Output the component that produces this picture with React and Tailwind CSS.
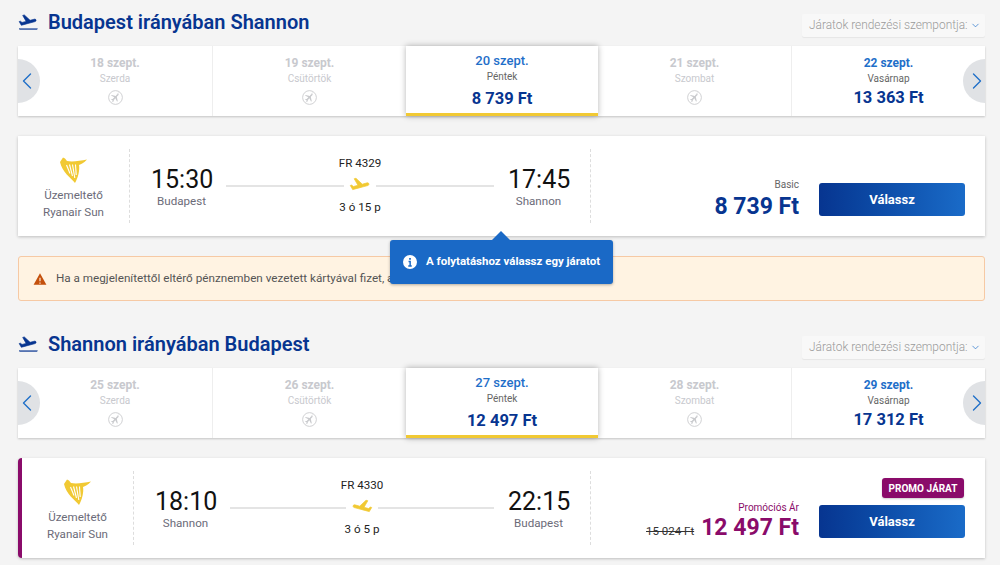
import React from 'react';
import { ChevronLeft, ChevronRight, ChevronDown } from 'lucide-react';

const TAKEOFF =
  'M21.64 9.64c-.21-.8-1.04-1.28-1.84-1.06L14.49 10 7.59 3.57l-1.93.51 4.14 7.17-4.97 1.33-1.97-1.54-1.45.39 1.82 3.16.77 1.33 1.6-.43 5.31-1.42 4.35-1.16 5.32-1.42c.81-.23 1.28-1.05 1.07-1.85z';

const PlaneHeading = () => (
  <svg viewBox="0 0 24 24" className="w-5 h-5 mr-[10px] mt-1 fill-[#073590] stroke-[#073590]">
    <path d={TAKEOFF} strokeWidth="0.8" />
    <rect x="2" y="20" width="21" height="1" strokeWidth="0.4" />
  </svg>
);

const NoFlight = () => (
  <svg viewBox="0 0 24 24" className="w-[15px] h-[15px] mx-auto">
    <circle cx="12" cy="12" r="11" fill="none" stroke="#c9cacd" strokeWidth="1.4" />
    <path
      transform="translate(12 12) rotate(45) scale(.72) translate(-12 -12)"
      fill="#c9cacd"
      d="M21 16v-2l-8-5V3.5c0-.83-.67-1.5-1.5-1.5S10 2.67 10 3.5V9l-8 5v2l8-2.5V19l-2 1.5V22l3.5-1 3.5 1v-1.5L13 19v-5.500l8 2.500z"
    />
    <path d="M6 20 17 4" stroke="#c9cacd" strokeWidth="1" />
  </svg>
);

const Harp = () => (
  <svg viewBox="0 0 27 27" className="w-[27px] h-[27px]">
    <path
      fill="#f1c933"
      d="M0 6 3 1.5 5 2.5 7 5C12 6 20 5 27 3.5 24 7 21 8 19 9 20 14 18 22 15 27 11 22 2 16 0 6Z"
    />
    <g stroke="#fff" strokeWidth="1.1">
      <path d="M6.5 9 10 17.5" />
      <path d="M9.5 8.500 12.500 20" />
      <path d="M12.500 8.500 14.800 22" />
      <path d="M15.500 8.500 16.200 19" />
    </g>
  </svg>
);

const DayCell = ({ date, day, price, active, divider }) => {
  if (active) {
    return (
      <div className="relative z-10 h-full text-center pt-[7px] border-b-[3px] border-[#f1c933] bg-white shadow-[0_0_6px_rgba(0,0,0,0.3)]">
        <div className="text-[13px] leading-4 font-medium text-[#1f6fc9]">{date}</div>
        <div className="mt-px text-[10px] leading-[14px] text-[#666]">{day}</div>
        <div className="mt-[5px] text-[16.500px] leading-5 font-bold text-[#073590]">{price}</div>
      </div>
    );
  }
  return (
    <div className={`h-full text-center pt-[9px] ${divider ? 'border-l border-[#eeeeee]' : ''}`}>
      <div className={`text-[12px] leading-4 font-bold ${price ? 'text-[#1f6fc9]' : 'text-[#c8c9ce]'}`}>{date}</div>
      <div className={`mt-px text-[10px] leading-[14px] ${price ? 'text-[#666]' : 'text-[#c8c9ce]'}`}>{day}</div>
      {price ? (
        <div className="mt-[2px] text-[16.500px] leading-5 font-bold text-[#073590]">{price}</div>
      ) : (
        <div className="mt-[4px]"><NoFlight /></div>
      )}
    </div>
  );
};

const DateStrip = ({ days }) => (
  <div className="relative h-[70px] grid grid-cols-[194px_194px_192px_193px_194px] bg-white shadow-[0_1px_2px_rgba(0,0,0,0.2)]">
    {days.map((d, i) => <DayCell key={d.date} {...d} divider={i === 1 || i === 4} />)}
    <button className="absolute z-20 left-0 top-[13px] w-[22px] h-[44px] rounded-r-full bg-[#e0e2e5] flex items-center overflow-hidden">
      <ChevronLeft size={28} strokeWidth={1.2} className="shrink-0 text-[#1f6fc9] ml-[-5.500px]" />
    </button>
    <button className="absolute z-20 right-0 top-[13px] w-[22px] h-[44px] rounded-l-full bg-[#e0e2e5] flex items-center justify-end overflow-hidden">
      <ChevronRight size={28} strokeWidth={1.2} className="shrink-0 text-[#1f6fc9] mr-[-6px]" />
    </button>
  </div>
);

const SectionHead = ({ title }) => (
  <div className="h-[38px] flex items-start">
    <PlaneHeading />
    <h2 className="text-[20px] leading-7 font-semibold text-[#073590]">{title}</h2>
    <div className="ml-auto mt-[6px] w-[183px] h-[23px] pl-[7px] flex items-center bg-[#f8f8f8] rounded-[2px] shadow-[0_1px_1px_rgba(0,0,0,0.06)] text-[11.900px] font-light text-[#9a9a9a] whitespace-nowrap">
      Járatok rendezési szempontja:
      <ChevronDown size={11} strokeWidth={1.5} className="ml-[2px] text-[#1f6fc9]" />
    </div>
  </div>
);

const FlightCard = ({ dep, from, arr, to, number, duration, promo, flip, children }) => (
  <div className={`mt-5 h-[100px] flex bg-white shadow-[0_1px_3px_rgba(0,0,0,0.22)] ${promo ? 'border-l-4 border-[#8a0b6a] rounded-l-[4px]' : ''}`}>
    <div className="w-[112px] my-[13px] pt-[7px] border-r border-dashed border-[#dddddd] flex flex-col items-center text-[11.600px] leading-[17px] text-[#6b6b78]">
      <Harp />
      <div className="mt-[4px]">Üzemeltető</div>
      <div>Ryanair Sun</div>
    </div>
    <div className="flex-1 my-[13px] px-[21px] flex items-center border-r border-dashed border-[#dddddd]">
      <div className="w-[61px] text-center shrink-0">
        <div className="text-[25px] leading-[30px] text-[#111]">{dep}</div>
        <div className="text-[11.600px] leading-[13px] text-[#6b6b78]">{from}</div>
      </div>
      <div className="flex-1 mx-[14px] pb-[2px] flex flex-col items-center text-[11.600px] leading-4 text-[#222]">
        <div>{number}</div>
        <div className="w-full mt-[7px] mb-[5px] flex items-center h-4">
          <div className="flex-1 h-[2px] bg-[#e4e4e4]" />
          <svg viewBox="0 0 24 24" className={`w-[22px] h-[22px] mx-[5px] fill-[#f1c933] stroke-[#f1c933] ${flip ? '-scale-x-100' : ''}`}>
            <path d={TAKEOFF} strokeWidth="0.8" />
          </svg>
          <div className="flex-1 h-[2px] bg-[#e4e4e4]" />
        </div>
        <div>{duration}</div>
      </div>
      <div className="w-[61px] text-center shrink-0">
        <div className="text-[25px] leading-[30px] text-[#111]">{arr}</div>
        <div className="text-[11.600px] leading-[13px] text-[#6b6b78]">{to}</div>
      </div>
    </div>
    <div className="w-[394px] pr-5 pb-5 flex items-end justify-end gap-5">
      {children}
      <div className="flex flex-col items-end gap-[7px]">
        {promo && (
          <div className="mr-[1px] w-[82px] h-5 flex items-center justify-center rounded-[3px] bg-[#8a0b6a] text-[10px] font-bold text-white shadow-[0_1px_2px_rgba(0,0,0,0.2)]">
            PROMO JÁRAT
          </div>
        )}
        <button className="w-[146px] h-[33px] rounded-[3px] bg-gradient-to-r from-[#073590] to-[#1a6bc8] text-[13px] font-bold text-white">
          Válassz
        </button>
      </div>
    </div>
  </div>
);

const outbound = [
  { date: '18 szept.', day: 'Szerda' },
  { date: '19 szept.', day: 'Csütörtök' },
  { date: '20 szept.', day: 'Péntek', price: '8 739 Ft', active: true },
  { date: '21 szept.', day: 'Szombat' },
  { date: '22 szept.', day: 'Vasárnap', price: '13 363 Ft' },
];

const inbound = [
  { date: '25 szept.', day: 'Szerda' },
  { date: '26 szept.', day: 'Csütörtök' },
  { date: '27 szept.', day: 'Péntek', price: '12 497 Ft', active: true },
  { date: '28 szept.', day: 'Szombat' },
  { date: '29 szept.', day: 'Vasárnap', price: '17 312 Ft' },
];

export default function App() {
  return (
    <div className="h-[565px] overflow-hidden bg-[#f4f4f4] pt-2 pl-[18px] pr-[15px] font-['Roboto',sans-serif]">
      <SectionHead title="Budapest irányában Shannon" />
      <DateStrip days={outbound} />
      <FlightCard dep="15:30" from="Budapest" arr="17:45" to="Shannon" number="FR 4329" duration="3 ó 15 p">
        <div className="text-right mb-[-1px]">
          <div className="mb-[5px] text-[10px] leading-[14px] text-[#666]">Basic</div>
          <div className="text-[23px] leading-5 font-bold text-[#073590]">8 739 Ft</div>
        </div>
      </FlightCard>

      <div className="relative mt-5 h-[45px] pl-[14px] flex items-center rounded-[3px] border border-[#f6c9a4] bg-[#fff3e2] text-[11.700px] text-[#555]">
        <svg viewBox="0 0 24 24" className="w-[14px] h-[14px] mr-[9px] fill-[#c4500c]">
          <path d="M1 22 12 2l11 20H1Zm10-4v2h2v-2h-2Zm0-8v6h2v-6h-2Z" />
        </svg>
        Ha a megjelenítettől eltérő pénznemben vezetett kártyával fizet, a
        <div className="absolute z-30 left-[371px] top-[-17px] w-[223px] h-[44px] pl-[13px] flex items-center rounded-[3px] bg-[#1a69c6] text-[11.500px] font-bold text-white shadow-[0_1px_3px_rgba(0,0,0,0.3)]">
          <div className="absolute left-[102px] top-[-9px] w-0 h-0 border-x-[9px] border-x-transparent border-b-[9px] border-b-[#1a69c6]" />
          <svg viewBox="0 0 24 24" className="w-[14px] h-[14px] mr-[9px] fill-white">
            <path d="M12 0a12 12 0 1 0 0 24 12 12 0 0 0 0-24Zm-1.500 5h3v3h-3V5Zm-1 5h4v7.500h1.500V20h-6v-2.500H11V12.500H9.500V10Z" />
          </svg>
          A folytatáshoz válassz egy járatot
        </div>
      </div>

      <div className="mt-[29px]">
        <SectionHead title="Shannon irányában Budapest" />
      </div>
      <DateStrip days={inbound} />
      <FlightCard dep="18:10" from="Shannon" arr="22:15" to="Budapest" number="FR 4330" duration="3 ó 5 p" promo flip>
        <div className="text-right mb-[-3px]">
          <div className="mb-[3px] text-[10px] leading-[14px] text-[#8a0b6a]">Promóciós Ár</div>
          <div className="flex items-baseline gap-[7px]">
            <span className="text-[11.500px] leading-5 text-[#333] line-through">15 024 Ft</span>
            <span className="text-[23px] leading-5 font-bold text-[#8a0b6a]">12 497 Ft</span>
          </div>
        </div>
      </FlightCard>
    </div>
  );
}
